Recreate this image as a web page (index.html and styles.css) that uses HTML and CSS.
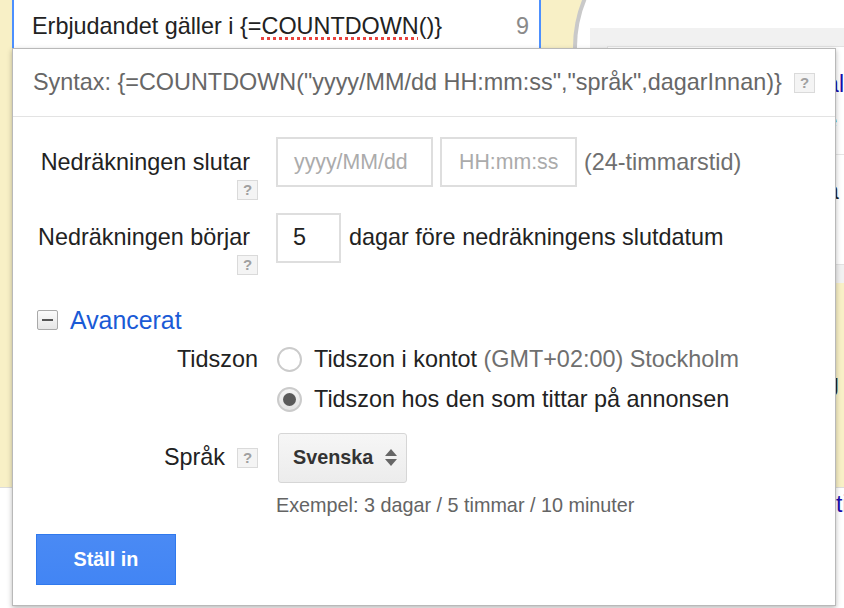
FILE: index.html
```html
<!DOCTYPE html>
<html lang="sv">
<head>
<meta charset="utf-8">
<title>Countdown</title>
<link rel="stylesheet" href="styles.css">
</head>
<body>
<div class="page">
  <div class="row-top">
    <div class="field">
      <span class="field-text">Erbjudandet gäller i {=<span class="spell">COUNTDOWN</span>()}</span>
      <span class="field-count">9</span>
    </div>
    <div class="right-col">
      <div class="phone">
        <div class="screen">
          <div class="ad">
            <div class="ad-title">al</div>
            <div class="ad-url">e</div>
            <div class="ad-desc">a</div>
          </div>
        </div>
      </div>
      <div class="side-text">g</div>
    </div>
  </div>
  <div class="row-bottom"><span class="side-link">ti</span></div>

  <div class="popup">
    <div class="pop-head">
      <span class="syntax">Syntax: {=COUNTDOWN("yyyy/MM/dd HH:mm:ss","språk",dagarInnan)}</span>
      <span class="help">?</span>
    </div>
    <div class="pop-body">
      <div class="frow frow-top">
        <div class="fl fl-stack">
          <span class="lbl-text">Nedräkningen slutar</span>
          <span class="help help-under">?</span>
        </div>
        <div class="ctl">
          <div class="inp inp-date">yyyy/MM/dd</div>
          <div class="inp inp-time">HH:mm:ss</div>
          <span class="muted">(24-timmarstid)</span>
        </div>
      </div>
      <div class="frow frow-top frow-second">
        <div class="fl fl-stack">
          <span class="lbl-text">Nedräkningen börjar</span>
          <span class="help help-under">?</span>
        </div>
        <div class="ctl ctl-wide">
          <div class="inp inp-num">5</div>
          <span class="plain">dagar före nedräkningens slutdatum</span>
        </div>
      </div>

      <div class="adv-head">
        <span class="collapse"><span class="collapse-bar"></span></span>
        <span class="adv-link">Avancerat</span>
      </div>

      <div class="frow frow-radio">
        <div class="fl"><span class="plain">Tidszon</span></div>
        <div class="radio-opt">
          <span class="radio"></span>
          <span class="plain">Tidszon i kontot <span class="muted">(GMT+02:00) Stockholm</span></span>
        </div>
      </div>
      <div class="frow frow-radio frow-radio2">
        <div class="fl"></div>
        <div class="radio-opt">
          <span class="radio radio-on"><span class="radio-dot"></span></span>
          <span class="plain">Tidszon hos den som tittar på annonsen</span>
        </div>
      </div>
      <div class="frow frow-lang">
        <div class="fl fl-lang">
          <span class="plain">Språk</span>
          <span class="help">?</span>
        </div>
        <div class="select">
          <span class="select-text">Svenska</span>
          <span class="arrows">
            <span class="arr-up"></span>
            <span class="arr-down"></span>
          </span>
        </div>
      </div>
      <div class="example">Exempel: 3 dagar / 5 timmar / 10 minuter</div>
      <button class="btn">Ställ in</button>
    </div>
  </div>
</div>
</body>
</html>
```
FILE: styles.css
```css
* { box-sizing: border-box; }
html, body {
  margin: 0;
  padding: 0;
}
body {
  width: 844px;
  height: 608px;
  overflow: hidden;
  background: #ffffff;
  font-family: "Liberation Sans", Arial, Helvetica, sans-serif;
  color: #222;
}
.page {
  position: relative;
  width: 844px;
  height: 608px;
  overflow: hidden;
}

/* ---------- background ---------- */
.row-top {
  height: 488px;
  background: #f8f0c6;
  border-bottom: 1px solid #dcdcdc;
  display: flex;
  align-items: flex-start;
}
.field {
  margin-left: 12px;
  width: 539px;
  height: 60px;
  background: #fff;
  border-left: 2px solid #4d90fe;
  border-right: 2px solid #4d90fe;
  display: flex;
  align-items: flex-start;
  justify-content: space-between;
  padding: 13px 10px 0 18px;
  font-size: 23.4px;
  line-height: 27px;
}
.field-text { color: #222; }
.spell {
  text-decoration: underline dotted #e8433e;
  text-decoration-thickness: 3px;
  text-underline-offset: 3px;
}
.field-count { color: #8a8a8a; }
.right-col {
  margin-left: 32px;
  flex: 1;
  display: flex;
  flex-direction: column;
}
.phone {
  margin-top: -80px;
  height: 363px;
  border-top: 4px solid #c9c9c9;
  border-left: 4px solid #c9c9c9;
  border-top-left-radius: 127px;
  background: #fff;
  padding-top: 104px;
}
.screen {
  margin-left: 13px;
  height: 255px;
  background: #f1f1f1;
  padding: 18px 0 18px 17px;
}
.ad {
  height: 219px;
  background: #fff;
  border: 1px solid #e2e2e2;
  border-right: none;
  padding-left: 218px;
  display: flex;
  flex-direction: column;
}
.ad-title {
  margin-top: 24px;
  font-size: 23px;
  line-height: 27px;
  color: #1a0dab;
}
.ad-url {
  margin-top: 11px;
  font-size: 20px;
  line-height: 24px;
  color: #006621;
}
.ad-desc {
  margin-top: 21px;
  margin-left: -218px;
  padding-left: 218px;
  border-top: 1px solid #e5e5e5;
  padding-top: 23px;
  font-size: 23px;
  line-height: 27px;
  color: #222;
}
.side-text {
  padding-top: 87px;
  padding-left: 253px;
  font-size: 23px;
  line-height: 27px;
  color: #222;
}
.row-bottom {
  height: 120px;
  padding-top: 3px;
  padding-left: 836px;
  font-size: 23px;
  line-height: 27px;
}
.side-link { color: #1a0dab; }

/* ---------- popup ---------- */
.popup {
  position: absolute;
  left: 12px;
  top: 48px;
  width: 824px;
  height: 558px;
  background: #fff;
  border: 1px solid #b9b9b9;
  box-shadow: 0 2px 5px rgba(0, 0, 0, 0.28);
}
.pop-head {
  height: 68px;
  border-bottom: 1px solid #e3e3e3;
  display: flex;
  align-items: center;
  padding: 0 20px 0 20px;
}
.syntax {
  font-size: 23.4px;
  line-height: 27px;
  color: #676767;
}
.pop-head .help { margin-left: auto; }
.help {
  width: 21px;
  height: 20px;
  flex: none;
  background: #f4f4f4;
  border: 1px solid #dadada;
  color: #a0a0a0;
  font-size: 15px;
  font-weight: bold;
  line-height: 18px;
  text-align: center;
}
.pop-body {
  padding-top: 20px;
  display: flex;
  flex-direction: column;
}
.frow {
  display: flex;
  align-items: center;
  gap: 18px;
}
.frow-top { align-items: flex-start; }
.frow-second { margin-top: 13px; }
.fl {
  width: 245px;
  flex: none;
  display: flex;
  justify-content: flex-end;
  align-items: center;
}
.fl-stack {
  flex-direction: column;
  align-items: flex-end;
}
.lbl-text {
  margin-top: 11.5px;
  padding-right: 8px;
  font-size: 23.4px;
  line-height: 27px;
  color: #222;
}
.help-under { margin-top: 4px; }
.ctl {
  height: 50px;
  display: flex;
  align-items: center;
  gap: 7px;
}
.ctl-wide { gap: 8px; }
.inp {
  height: 50px;
  border: 2px solid #dedede;
  display: flex;
  align-items: center;
  padding-left: 16px;
  font-size: 21.3px;
  color: #ababab;
  background: #fff;
}
.inp-date { width: 157px; }
.inp-time { width: 137px; padding-left: 17px; }
.inp-num {
  width: 65px;
  padding-left: 15px;
  font-size: 23.4px;
  color: #222;
}
.muted {
  font-size: 23.4px;
  color: #6f6f6f;
}
.plain {
  font-size: 23.4px;
  line-height: 27px;
  color: #222;
}

.adv-head {
  margin-top: 31px;
  height: 28px;
  display: flex;
  align-items: center;
  gap: 12px;
  padding-left: 24px;
}
.collapse {
  width: 21px;
  height: 20px;
  border: 1px solid #a9a9a9;
  border-radius: 2px;
  background: linear-gradient(#fbfbfb, #e6e6e6);
  display: flex;
  align-items: center;
  justify-content: center;
}
.collapse-bar {
  width: 11px;
  height: 2px;
  background: #555;
}
.adv-link {
  font-size: 24.9px;
  line-height: 28px;
  color: #1a5ad6;
}

.frow-radio {
  margin-top: 11.5px;
  height: 27px;
}
.frow-radio2 { margin-top: 13px; }
.radio-opt {
  display: flex;
  align-items: center;
  gap: 12px;
  margin-left: 1px;
}
.radio {
  width: 25px;
  height: 25px;
  flex: none;
  border-radius: 50%;
  border: 2px solid #cbcbcb;
  background: #fff;
  display: flex;
  align-items: center;
  justify-content: center;
}
.radio-on { background: linear-gradient(#f4f4f4, #e4e4e4); }
.radio-dot {
  width: 13px;
  height: 13px;
  border-radius: 50%;
  background: #5a5a5a;
}
.frow-lang { margin-top: 20px; }
.fl-lang { gap: 12px; }
.select {
  margin-left: 2px;
  width: 129px;
  height: 50px;
  border: 1px solid #d6d6d6;
  border-radius: 3px;
  background: linear-gradient(#f6f6f6, #ececec);
  display: flex;
  align-items: center;
  justify-content: space-between;
  padding: 0 9px 0 14px;
}
.select-text {
  font-size: 19.8px;
  font-weight: bold;
  color: #333;
}
.arrows {
  display: flex;
  flex-direction: column;
  gap: 3px;
}
.arr-up {
  width: 0;
  height: 0;
  border-left: 6px solid transparent;
  border-right: 6px solid transparent;
  border-bottom: 7px solid #666;
}
.arr-down {
  width: 0;
  height: 0;
  border-left: 6px solid transparent;
  border-right: 6px solid transparent;
  border-top: 7px solid #666;
}
.example {
  margin-top: 11px;
  padding-left: 263px;
  font-size: 19.8px;
  line-height: 23px;
  color: #646464;
}
.btn {
  margin-top: 17px;
  margin-left: 23px;
  width: 140px;
  height: 51px;
  background: linear-gradient(#4a8af4, #4285f4);
  border: 1px solid #3079ed;
  border-radius: 0;
  color: #fff;
  font-family: "Liberation Sans", Arial, sans-serif;
  font-size: 19.8px;
  font-weight: bold;
  padding: 0;
}
```
